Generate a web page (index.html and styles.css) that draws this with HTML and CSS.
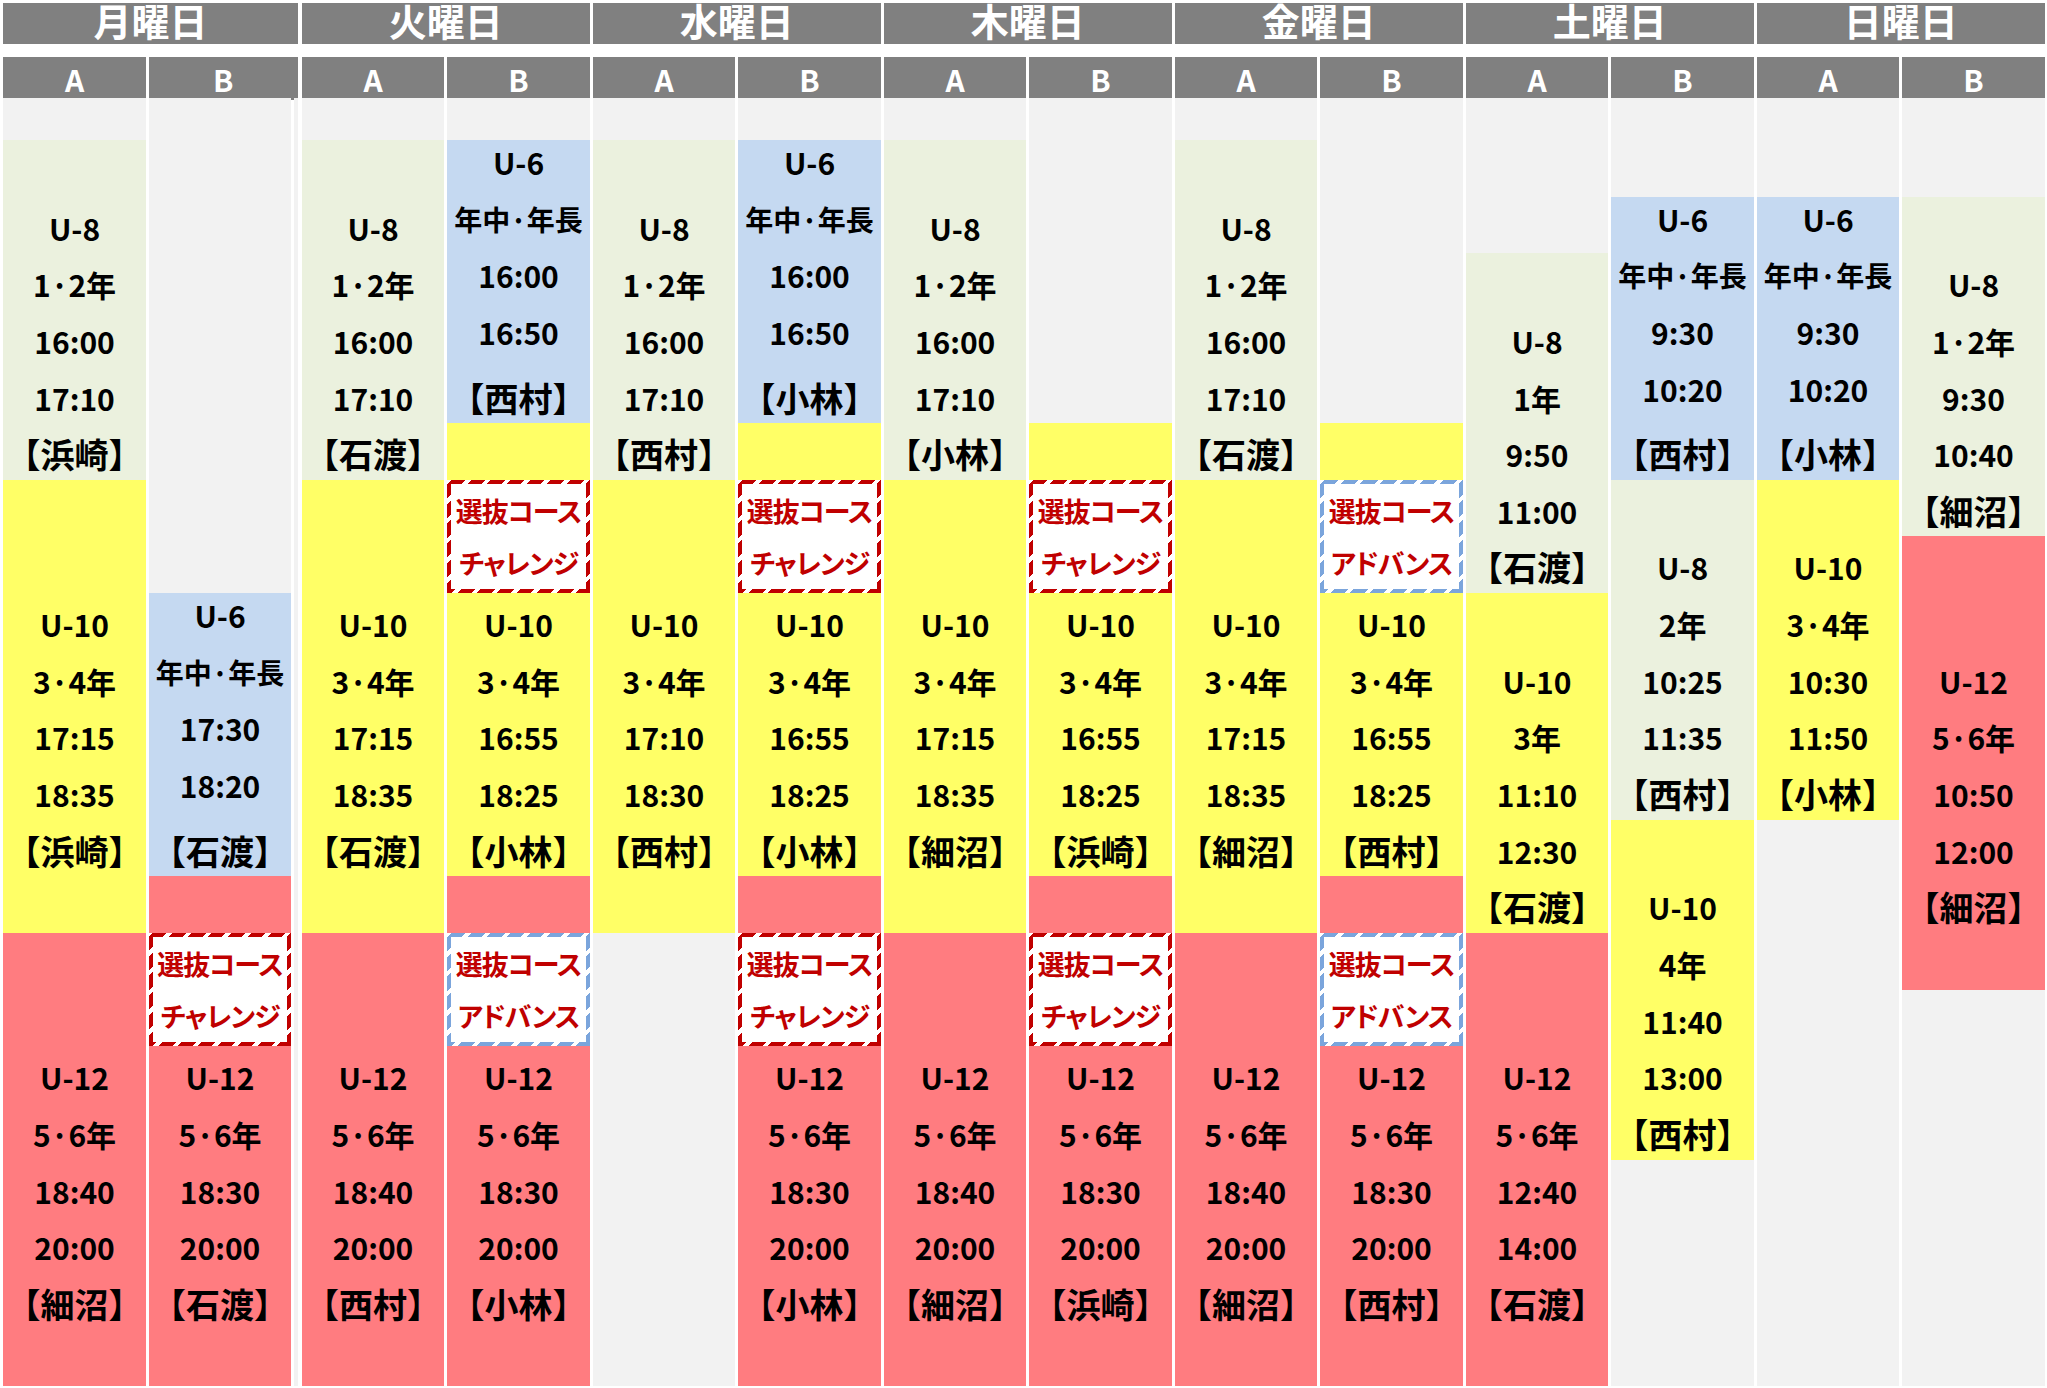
FILE: index.html
```html
<!DOCTYPE html>
<html lang="ja">
<head>
<meta charset="utf-8">
<title>時間割</title>
<link rel="stylesheet" href="styles.css">
</head>
<body>
<div class="sheet">

  <section class="day mon">
    <div class="dh">月曜日</div>
    <div class="abrow"><div class="ab">A</div><div class="ab">B</div></div>
    <div class="cols">
      <div class="col">
        <div class="b gy s1"></div>
        <div class="b gr s6"><div class="l"></div><div class="l">U-8</div><div class="l">1·2年</div><div class="l">16:00</div><div class="l">17:10</div><div class="l">【浜崎】</div></div>
        <div class="b ye s8"><div class="l"></div><div class="l"></div><div class="l">U-10</div><div class="l">3·4年</div><div class="l">17:15</div><div class="l">18:35</div><div class="l">【浜崎】</div></div>
        <div class="b rd s8"><div class="l"></div><div class="l"></div><div class="l">U-12</div><div class="l">5·6年</div><div class="l">18:40</div><div class="l">20:00</div><div class="l">【細沼】</div></div>
      </div>
      <div class="col">
        <div class="b gy s9"></div>
        <div class="b bl s5"><div class="l">U-6</div><div class="l k">年中·年長</div><div class="l">17:30</div><div class="l">18:20</div><div class="l">【石渡】</div></div>
        <div class="b rd s1"></div>
        <div class="box ch"><div class="bi"><div class="bl1">選抜コース</div><div class="bl1">チャレンジ</div></div></div>
        <div class="b rd s6"><div class="l">U-12</div><div class="l">5·6年</div><div class="l">18:30</div><div class="l">20:00</div><div class="l">【石渡】</div></div>
      </div>
    </div>
  </section>

  <section class="day">
    <div class="dh">火曜日</div>
    <div class="abrow"><div class="ab">A</div><div class="ab">B</div></div>
    <div class="cols">
      <div class="col">
        <div class="b gy s1"></div>
        <div class="b gr s6"><div class="l"></div><div class="l">U-8</div><div class="l">1·2年</div><div class="l">16:00</div><div class="l">17:10</div><div class="l">【石渡】</div></div>
        <div class="b ye s8"><div class="l"></div><div class="l"></div><div class="l">U-10</div><div class="l">3·4年</div><div class="l">17:15</div><div class="l">18:35</div><div class="l">【石渡】</div></div>
        <div class="b rd s8"><div class="l"></div><div class="l"></div><div class="l">U-12</div><div class="l">5·6年</div><div class="l">18:40</div><div class="l">20:00</div><div class="l">【西村】</div></div>
      </div>
      <div class="col">
        <div class="b gy s1"></div>
        <div class="b bl s5"><div class="l">U-6</div><div class="l k">年中·年長</div><div class="l">16:00</div><div class="l">16:50</div><div class="l">【西村】</div></div>
        <div class="b ye s1"></div>
        <div class="box ch"><div class="bi"><div class="bl1">選抜コース</div><div class="bl1">チャレンジ</div></div></div>
        <div class="b ye s5"><div class="l">U-10</div><div class="l">3·4年</div><div class="l">16:55</div><div class="l">18:25</div><div class="l">【小林】</div></div>
        <div class="b rd s1"></div>
        <div class="box ad"><div class="bi"><div class="bl1">選抜コース</div><div class="bl1">アドバンス</div></div></div>
        <div class="b rd s6"><div class="l">U-12</div><div class="l">5·6年</div><div class="l">18:30</div><div class="l">20:00</div><div class="l">【小林】</div></div>
      </div>
    </div>
  </section>

  <section class="day">
    <div class="dh">水曜日</div>
    <div class="abrow"><div class="ab">A</div><div class="ab">B</div></div>
    <div class="cols">
      <div class="col">
        <div class="b gy s1"></div>
        <div class="b gr s6"><div class="l"></div><div class="l">U-8</div><div class="l">1·2年</div><div class="l">16:00</div><div class="l">17:10</div><div class="l">【西村】</div></div>
        <div class="b ye s8"><div class="l"></div><div class="l"></div><div class="l">U-10</div><div class="l">3·4年</div><div class="l">17:10</div><div class="l">18:30</div><div class="l">【西村】</div></div>
        <div class="b gy s8"></div>
      </div>
      <div class="col">
        <div class="b gy s1"></div>
        <div class="b bl s5"><div class="l">U-6</div><div class="l k">年中·年長</div><div class="l">16:00</div><div class="l">16:50</div><div class="l">【小林】</div></div>
        <div class="b ye s1"></div>
        <div class="box ch"><div class="bi"><div class="bl1">選抜コース</div><div class="bl1">チャレンジ</div></div></div>
        <div class="b ye s5"><div class="l">U-10</div><div class="l">3·4年</div><div class="l">16:55</div><div class="l">18:25</div><div class="l">【小林】</div></div>
        <div class="b rd s1"></div>
        <div class="box ch"><div class="bi"><div class="bl1">選抜コース</div><div class="bl1">チャレンジ</div></div></div>
        <div class="b rd s6"><div class="l">U-12</div><div class="l">5·6年</div><div class="l">18:30</div><div class="l">20:00</div><div class="l">【小林】</div></div>
      </div>
    </div>
  </section>

  <section class="day">
    <div class="dh">木曜日</div>
    <div class="abrow"><div class="ab">A</div><div class="ab">B</div></div>
    <div class="cols">
      <div class="col">
        <div class="b gy s1"></div>
        <div class="b gr s6"><div class="l"></div><div class="l">U-8</div><div class="l">1·2年</div><div class="l">16:00</div><div class="l">17:10</div><div class="l">【小林】</div></div>
        <div class="b ye s8"><div class="l"></div><div class="l"></div><div class="l">U-10</div><div class="l">3·4年</div><div class="l">17:15</div><div class="l">18:35</div><div class="l">【細沼】</div></div>
        <div class="b rd s8"><div class="l"></div><div class="l"></div><div class="l">U-12</div><div class="l">5·6年</div><div class="l">18:40</div><div class="l">20:00</div><div class="l">【細沼】</div></div>
      </div>
      <div class="col">
        <div class="b gy s6"></div>
        <div class="b ye s1"></div>
        <div class="box ch"><div class="bi"><div class="bl1">選抜コース</div><div class="bl1">チャレンジ</div></div></div>
        <div class="b ye s5"><div class="l">U-10</div><div class="l">3·4年</div><div class="l">16:55</div><div class="l">18:25</div><div class="l">【浜崎】</div></div>
        <div class="b rd s1"></div>
        <div class="box ch"><div class="bi"><div class="bl1">選抜コース</div><div class="bl1">チャレンジ</div></div></div>
        <div class="b rd s6"><div class="l">U-12</div><div class="l">5·6年</div><div class="l">18:30</div><div class="l">20:00</div><div class="l">【浜崎】</div></div>
      </div>
    </div>
  </section>

  <section class="day">
    <div class="dh">金曜日</div>
    <div class="abrow"><div class="ab">A</div><div class="ab">B</div></div>
    <div class="cols">
      <div class="col">
        <div class="b gy s1"></div>
        <div class="b gr s6"><div class="l"></div><div class="l">U-8</div><div class="l">1·2年</div><div class="l">16:00</div><div class="l">17:10</div><div class="l">【石渡】</div></div>
        <div class="b ye s8"><div class="l"></div><div class="l"></div><div class="l">U-10</div><div class="l">3·4年</div><div class="l">17:15</div><div class="l">18:35</div><div class="l">【細沼】</div></div>
        <div class="b rd s8"><div class="l"></div><div class="l"></div><div class="l">U-12</div><div class="l">5·6年</div><div class="l">18:40</div><div class="l">20:00</div><div class="l">【細沼】</div></div>
      </div>
      <div class="col">
        <div class="b gy s6"></div>
        <div class="b ye s1"></div>
        <div class="box ad"><div class="bi"><div class="bl1">選抜コース</div><div class="bl1">アドバンス</div></div></div>
        <div class="b ye s5"><div class="l">U-10</div><div class="l">3·4年</div><div class="l">16:55</div><div class="l">18:25</div><div class="l">【西村】</div></div>
        <div class="b rd s1"></div>
        <div class="box ad"><div class="bi"><div class="bl1">選抜コース</div><div class="bl1">アドバンス</div></div></div>
        <div class="b rd s6"><div class="l">U-12</div><div class="l">5·6年</div><div class="l">18:30</div><div class="l">20:00</div><div class="l">【西村】</div></div>
      </div>
    </div>
  </section>

  <section class="day">
    <div class="dh">土曜日</div>
    <div class="abrow"><div class="ab">A</div><div class="ab">B</div></div>
    <div class="cols">
      <div class="col">
        <div class="b gy s3"></div>
        <div class="b gr s6"><div class="l"></div><div class="l">U-8</div><div class="l">1年</div><div class="l">9:50</div><div class="l">11:00</div><div class="l">【石渡】</div></div>
        <div class="b ye s6"><div class="l"></div><div class="l">U-10</div><div class="l">3年</div><div class="l">11:10</div><div class="l">12:30</div><div class="l">【石渡】</div></div>
        <div class="b rd s8"><div class="l"></div><div class="l"></div><div class="l">U-12</div><div class="l">5·6年</div><div class="l">12:40</div><div class="l">14:00</div><div class="l">【石渡】</div></div>
      </div>
      <div class="col">
        <div class="b gy s2"></div>
        <div class="b bl s5"><div class="l">U-6</div><div class="l k">年中·年長</div><div class="l">9:30</div><div class="l">10:20</div><div class="l">【西村】</div></div>
        <div class="b gr s6"><div class="l"></div><div class="l">U-8</div><div class="l">2年</div><div class="l">10:25</div><div class="l">11:35</div><div class="l">【西村】</div></div>
        <div class="b ye s6"><div class="l"></div><div class="l">U-10</div><div class="l">4年</div><div class="l">11:40</div><div class="l">13:00</div><div class="l">【西村】</div></div>
        <div class="b gy s4"></div>
      </div>
    </div>
  </section>

  <section class="day">
    <div class="dh">日曜日</div>
    <div class="abrow"><div class="ab">A</div><div class="ab">B</div></div>
    <div class="cols">
      <div class="col">
        <div class="b gy s2"></div>
        <div class="b bl s5"><div class="l">U-6</div><div class="l k">年中·年長</div><div class="l">9:30</div><div class="l">10:20</div><div class="l">【小林】</div></div>
        <div class="b ye s6"><div class="l"></div><div class="l">U-10</div><div class="l">3·4年</div><div class="l">10:30</div><div class="l">11:50</div><div class="l">【小林】</div></div>
        <div class="b gy s10"></div>
      </div>
      <div class="col">
        <div class="b gy s2"></div>
        <div class="b gr s6"><div class="l"></div><div class="l">U-8</div><div class="l">1·2年</div><div class="l">9:30</div><div class="l">10:40</div><div class="l">【細沼】</div></div>
        <div class="b rd s8"><div class="l"></div><div class="l"></div><div class="l">U-12</div><div class="l">5·6年</div><div class="l">10:50</div><div class="l">12:00</div><div class="l">【細沼】</div></div>
        <div class="b gy s7"></div>
      </div>
    </div>
  </section>

</div>
</body>
</html>
```

FILE: styles.css
```css
html, body {
  margin: 0;
  padding: 0;
  background: #ffffff;
}

body {
  font-family: "Noto Sans CJK JP", "Noto Sans", sans-serif;
  font-weight: 700;
  color: #000000;
}

.sheet {
  display: flex;
  gap: 3px;
  padding: 3px 0 0 3.3px;
  width: 2047px;
  height: 1388px;
  box-sizing: border-box;
  overflow: hidden;
}

.day {
  width: 288px;
  flex: none;
  display: flex;
  flex-direction: column;
}

.day.mon {
  width: 294.5px;
  margin-right: 1px;
}

.dh {
  height: 41px;
  background: #808080;
  color: #ffffff;
  font-size: 38px;
  line-height: 33px;
  text-align: center;
  overflow: hidden;
}

.abrow,
.cols {
  display: grid;
  grid-template-columns: 142.5px 1fr;
  column-gap: 3px;
}

.mon .cols {
  grid-template-columns: 142.5px 142.5px;
  background: linear-gradient(to right, transparent 291px, #f2f2f2 291px 294.5px);
}

.abrow {
  margin-top: 13px;
  height: 41px;
}

.ab {
  background: #808080;
  color: #ffffff;
  font-size: 30px;
  line-height: 41px;
  padding-top: 2px;
  box-sizing: border-box;
  text-align: center;
}

.col {
  display: grid;
  grid-template-rows: 42px repeat(22, 56.65px);
  background: #ffffff;
}

.b {
  display: flex;
  flex-direction: column;
  overflow: hidden;
}

.l {
  height: 56.65px;
  line-height: 62px;
  flex: none;
  font-size: 30px;
  text-align: center;
  white-space: nowrap;
}

.l.k {
  font-size: 28px;
}

.bl .l {
  line-height: 45px;
}

.b .l:last-child {
  font-size: 34px;
  line-height: 62px;
}

.gy { background: #f2f2f2; }
.gr { background: #ebf1de; }
.bl { background: #c5d9f1; }
.ye { background: #ffff66; }
.rd { background: #ff7c80; }

.s1 { grid-row: span 1; }
.s2 { grid-row: span 2; }
.s3 { grid-row: span 3; }
.s4 { grid-row: span 4; }
.s5 { grid-row: span 5; }
.s6 { grid-row: span 6; }
.s7 { grid-row: span 7; }
.s8 { grid-row: span 8; }
.s9 { grid-row: span 9; }
.s10 { grid-row: span 10; }

.box {
  grid-row: span 2;
  padding: 4px;
  box-sizing: border-box;
}

.box.ch {
  background: repeating-linear-gradient(-45deg, #c00000 0 10px, #ffffff 10px 14px);
}

.box.ad {
  background: repeating-linear-gradient(-45deg, #7ba5dc 0 10px, #ffffff 10px 14px);
}

.bi {
  background: #ffffff;
  height: 100%;
  display: grid;
  grid-template-rows: 1fr 1fr;
  align-items: center;
}

.bl1 {
  color: #c00000;
  font-size: 27px;
  letter-spacing: -1px;
  text-align: center;
  white-space: nowrap;
  font-feature-settings: "palt";
  line-height: 1;
}
```
